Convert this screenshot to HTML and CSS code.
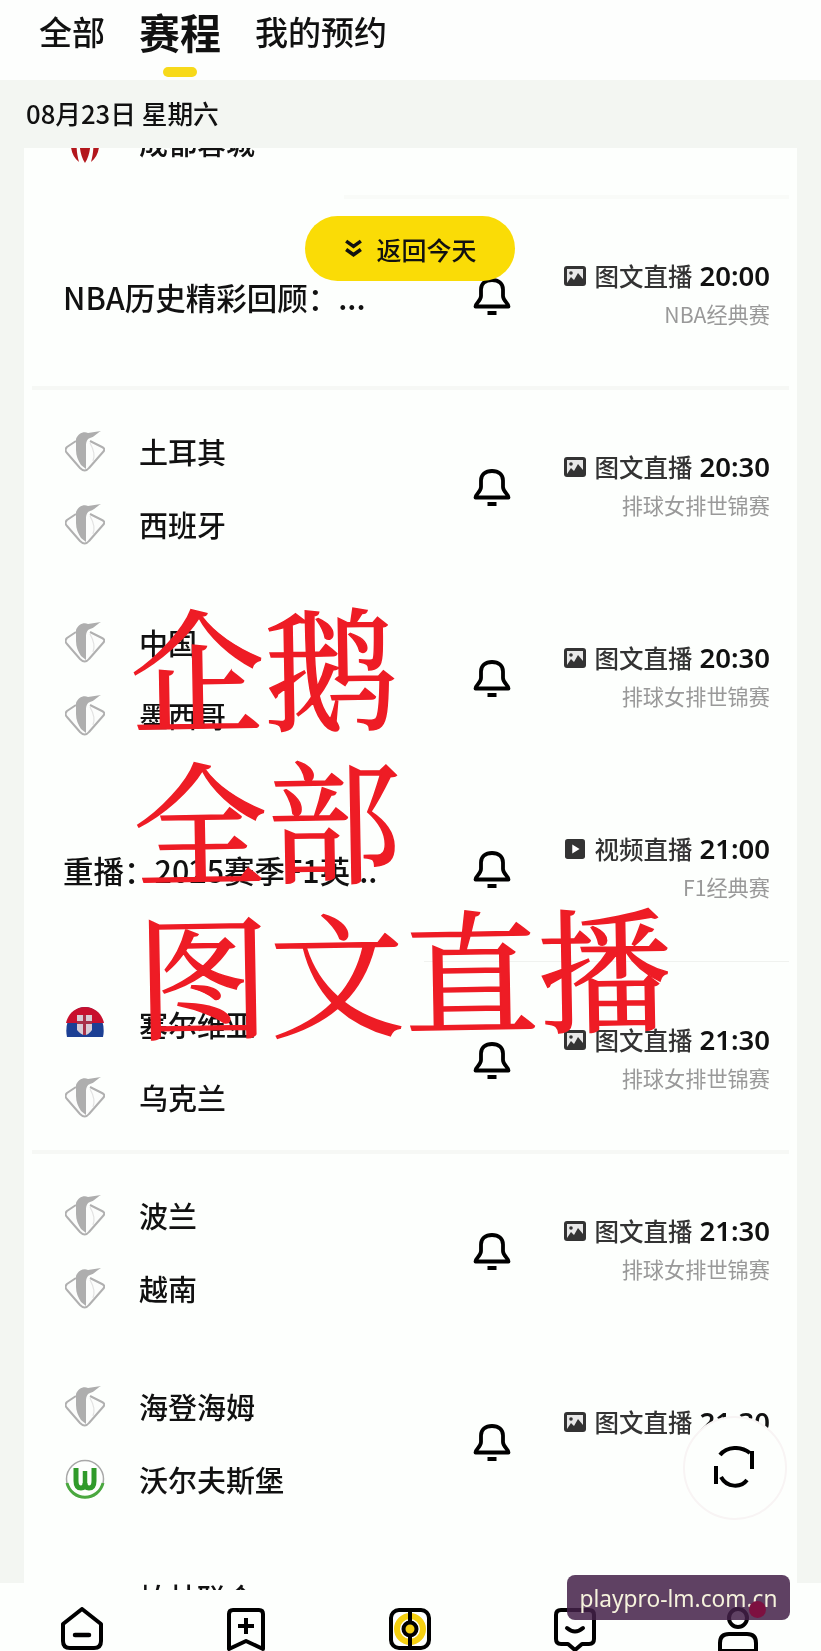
FILE: index.html
```html
<!DOCTYPE html>
<html lang="zh-CN">
<head>
<meta charset="utf-8">
<title>赛程</title>
<link rel="stylesheet" href="styles.css">
</head>
<body>
<svg class="defs" width="0" height="0" aria-hidden="true">
  <defs>
    <symbol id="penguin" viewBox="0 0 40 42">
      <path d="M11 11 2 17Q-1 20 2 23L15 38Q20 43 24 38L38 22Q41 19 37 17L25 11" fill="#fcfdfc" stroke="#b0b0b0" stroke-width="2"/>
      <path d="M11 9C13 4 18 1 23 3L36 1C31 4 29 7 25 8 22 9 21 12 21 16L21 39 16 35C13 30 11 26 11 20Z" fill="#aeaeae"/>
      <path d="M25 13C29 20 30 26 28 31" fill="none" stroke="#e2e2e2" stroke-width="1.200"/>
    </symbol>
    <symbol id="bell" viewBox="0 0 38 38">
      <path d="M8 11.500C8 5.500 12.500 2 19 2S30 5.500 30 11.500V18C30 23 35.500 25 35.500 28.500H2.500C2.500 25 8 23 8 18Z" fill="none" stroke="#000" stroke-width="3.800" stroke-linejoin="round"/>
      <rect x="14.500" y="33" width="9" height="4" fill="#000"/>
    </symbol>
    <symbol id="pic" viewBox="0 0 22 20">
      <rect width="22" height="20" rx="3" fill="#333"/>
      <rect x="3" y="3" width="16" height="14" fill="#e8e8e8"/>
      <circle cx="7" cy="7" r="1.800" fill="#333"/>
      <path d="M3 17 7 11 10 14 14 7 19 13V17Z" fill="#333"/>
    </symbol>
    <symbol id="play" viewBox="0 0 22 22">
      <rect width="22" height="22" rx="3" fill="#333"/>
      <path d="M8 6 16 11 8 16Z" fill="#fff"/>
    </symbol>
  </defs>
</svg>
<div class="app">
  <header class="tabs">
    <span class="tab">全部</span>
    <span class="tab tab-active">赛程</span>
    <span class="tab">我的预约</span>
  </header>
  <main class="schedule">
    <div class="date">08月23日 星期六</div>
    <div class="card">
      <div class="list">
        <section class="row">
          <div class="match">
            <div class="team"><svg class="badge" viewBox="0 0 40 42"><use href="#penguin"/></svg><span>四川九牛</span></div>
            <div class="team"><svg class="badge" viewBox="0 0 40 42"><path d="M6 19C5 29 8 36 14 41 12 34 11 26 12 19ZM34 19C35 29 32 36 26 41 28 34 29 26 28 19ZM15 19H25C26 27 24 36 20 42 16 36 14 27 15 19Z" fill="#b3171c"/></svg><span>成都蓉城</span></div>
          </div>
          <svg class="bell"><use href="#bell"/></svg>
          <div class="meta"><div class="live"><svg class="live-icon"><use href="#pic"/></svg>图文直播<b>19:35</b></div><div class="league">中超联赛</div></div>
        </section>
        <section class="row row-sep-part">
          <div class="title">NBA历史精彩回顾：...</div>
          <svg class="bell"><use href="#bell"/></svg>
          <div class="meta"><div class="live"><svg class="live-icon"><use href="#pic"/></svg>图文直播<b>20:00</b></div><div class="league">NBA经典赛</div></div>
        </section>
        <section class="row row-sep">
          <div class="match">
            <div class="team"><svg class="badge" viewBox="0 0 40 42"><use href="#penguin"/></svg><span>土耳其</span></div>
            <div class="team"><svg class="badge" viewBox="0 0 40 42"><use href="#penguin"/></svg><span>西班牙</span></div>
          </div>
          <svg class="bell"><use href="#bell"/></svg>
          <div class="meta"><div class="live"><svg class="live-icon"><use href="#pic"/></svg>图文直播<b>20:30</b></div><div class="league">排球女排世锦赛</div></div>
        </section>
        <section class="row">
          <div class="match">
            <div class="team"><svg class="badge" viewBox="0 0 40 42"><use href="#penguin"/></svg><span>中国</span></div>
            <div class="team"><svg class="badge" viewBox="0 0 40 42"><use href="#penguin"/></svg><span>墨西哥</span></div>
          </div>
          <svg class="bell"><use href="#bell"/></svg>
          <div class="meta"><div class="live"><svg class="live-icon"><use href="#pic"/></svg>图文直播<b>20:30</b></div><div class="league">排球女排世锦赛</div></div>
        </section>
        <section class="row row-sep-faint">
          <div class="title">重播：2025赛季F1英...</div>
          <svg class="bell"><use href="#bell"/></svg>
          <div class="meta"><div class="live"><svg class="live-icon"><use href="#play"/></svg>视频直播<b>21:00</b></div><div class="league">F1经典赛</div></div>
        </section>
        <section class="row">
          <div class="match">
            <div class="team"><svg class="badge" viewBox="0 0 40 42"><path d="M2 34C-1 20 6 4 20 4S41 20 38 34Z" fill="#1c3f94"/><path d="M1 20C3 11 10 4 20 4S37 11 39 20Z" fill="#c8102e"/><path d="M12 12H27V27Q20 37 12 27Z" fill="#d9cdd6"/><path d="M18 12H21V32H18ZM12 18H27V21H12Z" fill="#a8324a"/></svg><span>塞尔维亚</span></div>
            <div class="team"><svg class="badge" viewBox="0 0 40 42"><use href="#penguin"/></svg><span>乌克兰</span></div>
          </div>
          <svg class="bell"><use href="#bell"/></svg>
          <div class="meta"><div class="live"><svg class="live-icon"><use href="#pic"/></svg>图文直播<b>21:30</b></div><div class="league">排球女排世锦赛</div></div>
        </section>
        <section class="row row-sep">
          <div class="match">
            <div class="team"><svg class="badge" viewBox="0 0 40 42"><use href="#penguin"/></svg><span>波兰</span></div>
            <div class="team"><svg class="badge" viewBox="0 0 40 42"><use href="#penguin"/></svg><span>越南</span></div>
          </div>
          <svg class="bell"><use href="#bell"/></svg>
          <div class="meta"><div class="live"><svg class="live-icon"><use href="#pic"/></svg>图文直播<b>21:30</b></div><div class="league">排球女排世锦赛</div></div>
        </section>
        <section class="row">
          <div class="match">
            <div class="team"><svg class="badge" viewBox="0 0 40 42"><use href="#penguin"/></svg><span>海登海姆</span></div>
            <div class="team"><svg class="badge" viewBox="0 0 40 42"><circle cx="20" cy="21" r="18.500" fill="none" stroke="#a8a8a8" stroke-width="1.500"/><path d="M2 25A18.500 18.500 0 0 0 38 25" fill="none" stroke="#4aa83f" stroke-width="3"/><path d="M11 10V23Q11 30 16 30 20 30 20 25 20 30 24 30 29 30 29 23V10" fill="none" stroke="#2f9a2a" stroke-width="5"/><path d="M20 13V25" stroke="#2f9a2a" stroke-width="4.500"/></svg><span>沃尔夫斯堡</span></div>
          </div>
          <svg class="bell"><use href="#bell"/></svg>
          <div class="meta"><div class="live"><svg class="live-icon"><use href="#pic"/></svg>图文直播<b>21:30</b></div><div class="league">德甲联赛</div></div>
        </section>
        <section class="row">
          <div class="match">
            <div class="team"><div class="badge"></div><span>柏林联合</span></div>
            <div class="team"><div class="badge"></div><span>斯图加特</span></div>
          </div>
        </section>
      </div>
    </div>
  </main>
  <nav class="nav">
    <svg class="nav-icon" viewBox="0 0 44 44"><path d="M3 17 22 2 41 17V34Q41 41 34 41H10Q3 41 3 34Z" fill="none" stroke="#000" stroke-width="4" stroke-linejoin="round"/><path d="M15 28H29" stroke="#000" stroke-width="4.500" stroke-linecap="round"/></svg>
    <svg class="nav-icon" viewBox="0 0 44 44"><path d="M5 42V7Q5 3 9 3H35Q39 3 39 7V42L22 34Z" fill="none" stroke="#000" stroke-width="4" stroke-linejoin="round"/><path d="M14 19H30M22 11V27" stroke="#000" stroke-width="4"/></svg>
    <svg class="nav-icon" viewBox="0 0 44 44"><rect x="3" y="3" width="38" height="38" rx="8" fill="#fdfffd" stroke="#000" stroke-width="4"/><circle cx="22" cy="22" r="13" fill="none" stroke="#f5d010" stroke-width="6"/><path d="M22 3V41" stroke="#000" stroke-width="4"/><circle cx="22" cy="22" r="6.500" fill="#f5d010" stroke="#000" stroke-width="4"/></svg>
    <svg class="nav-icon" viewBox="0 0 44 44"><path d="M3 8Q3 3 8 3H36Q41 3 41 8V32Q41 37 36 37H29L22 43 15 37H8Q3 37 3 32Z" fill="none" stroke="#000" stroke-width="4" stroke-linejoin="round"/><path d="M14 21Q22 28 30 21" fill="none" stroke="#000" stroke-width="4" stroke-linecap="round"/></svg>
    <div class="nav-person">
      <svg class="nav-icon" viewBox="0 0 44 44"><circle cx="21" cy="11" r="9" fill="none" stroke="#000" stroke-width="4"/><path d="M3 44V36Q3 27 12 27H30Q39 27 39 36V44Z" fill="none" stroke="#000" stroke-width="4"/></svg>
      <span class="dot"></span>
    </div>
  </nav>
  <button class="today"><svg class="chev" viewBox="0 0 20 18"><path d="M3 2 10 7 17 2M3 10 10 15 17 10" fill="none" stroke="#111" stroke-width="3.400"/></svg>返回今天</button>
  <div class="refresh"><svg viewBox="0 0 42 42" class="refresh-icon"><path d="M6 9C13 0 27 0 36 7M38 5V23" fill="none" stroke="#000" stroke-width="4"/><path d="M33 34C27 42 13 42 7 31M2 20V38" fill="none" stroke="#000" stroke-width="4"/></svg></div>
  <div class="stamp">
    <div>企鹅</div>
    <div>全部</div>
    <div>图文直播</div>
  </div>
  <div class="site">playpro-lm.com.cn</div>
</div>
</body>
</html>
```

FILE: styles.css
```css
* { box-sizing: border-box; }
html, body { margin: 0; padding: 0; }
body { font-family: "Noto Sans CJK SC", "Noto Sans", sans-serif; color: #111; background: #fff; }
.defs { position: absolute; }
.app { position: relative; width: 821px; height: 1651px; overflow: hidden; display: flex; flex-direction: column; filter: blur(.35px); }

.tabs { height: 80px; flex: none; background: #fdfefd; display: flex; align-items: center; padding: 0 0 19px 39px; }
.tab { font-size: 33px; line-height: 50px; position: relative; margin-right: 34px; font-weight: 500; }
.tab-active { font-size: 41px; font-weight: 700; }
.tab-active::after { content: ""; position: absolute; left: 24px; top: 61px; width: 34px; height: 10px; border-radius: 5px; background: #f7d91a; }

.schedule { flex: 1; min-height: 0; display: flex; flex-direction: column; padding: 0 24px; background: linear-gradient(#f3f6f2 calc(100% - 7px), #fdfffd 0); }
.date { height: 68px; flex: none; font-size: 25.700px; line-height: 66px; margin-left: 2px; font-weight: 500; }
.card { flex: 1; min-height: 0; overflow: hidden; background: #fdfffd; }
.list { margin-top: -142px; }

.row { height: 191px; display: flex; align-items: center; padding: 9px 27px 0 41px; position: relative; }
.row-sep::before, .row-sep-part::before { content: ""; position: absolute; height: 4px; top: -2px; right: 8px; left: 8px; background: #f6f8f5; }
.row-sep-part::before { left: 320px; background: #f9fbf8; }
.row-sep-faint::after { content: ""; position: absolute; height: 1px; bottom: -1px; right: 8px; left: 400px; background: #f0f2ef; }

.match { width: 368px; flex: none; display: flex; flex-direction: column; gap: 31px; margin-top: -2px; }
.team { display: flex; align-items: center; height: 42px; font-size: 29px; color: #111; font-weight: 500; }
.team span { white-space: nowrap; }
.badge { width: 40px; height: 42px; flex: none; margin-right: 34px; }
.title { width: 368px; flex: none; font-size: 30.500px; white-space: nowrap; margin-left: -2px; margin-right: 2px; font-weight: 500; }
.bell { width: 38px; height: 38px; flex: none; margin-left: 40px; }
.meta { flex: 1; display: flex; flex-direction: column; align-items: flex-end; gap: 7px; white-space: nowrap; margin-bottom: 6px; }
.live { font-size: 24.500px; line-height: 32px; color: #333; display: flex; align-items: center; gap: 8px; font-weight: 500; }
.live b { font-size: 27.500px; font-weight: 600; color: #111; font-family: "Noto Sans", sans-serif; margin-left: -1px; }
.live-icon { width: 22px; height: 20px; flex: none; }
.league { font-size: 21.200px; line-height: 30px; color: #999; }

.nav { height: 61px; flex: none; background: #fdfffd; display: grid; grid-template-columns: repeat(5, 1fr); justify-items: center; padding-top: 17px; overflow: hidden; }
.nav-icon { width: 44px; height: 44px; display: block; }
.nav-person { position: relative; }
.dot { position: absolute; z-index: 2; right: -5px; top: -6px; width: 17px; height: 17px; border-radius: 50%; background: #7d1040; }

.today { position: absolute; left: 305px; top: 216px; width: 210px; height: 65px; border: 0; border-radius: 33px; background: #fadc06; display: flex; align-items: center; justify-content: center; gap: 12px; font: 500 25px "Noto Sans CJK SC", sans-serif; color: #111; padding: 0; }
.chev { width: 21px; height: 19px; }
.refresh { position: absolute; left: 683px; top: 1416px; width: 104px; height: 104px; border-radius: 50%; background: #fdfffd; border: 2px solid #f8f4f4; display: flex; align-items: center; justify-content: center; }
.refresh-icon { width: 42px; height: 42px; margin-top: -3px; }

.stamp { position: absolute; left: 129px; top: 590px; font-size: 134px; line-height: 153px; color: #ee1c25; -webkit-text-stroke: 1.500px #ee1c25; transform: rotate(-1deg); transform-origin: left top; font-family: "Noto Serif CJK SC", "AR PL UMing CN", "Noto Sans CJK SC", serif; }

.site { position: absolute; left: 567px; top: 1575px; width: 223px; height: 45px; border-radius: 8px; background: rgba(67,32,72,.85); color: #f5f2dc; font: 22.700px/47px "Noto Sans", sans-serif; text-align: center; }
```
